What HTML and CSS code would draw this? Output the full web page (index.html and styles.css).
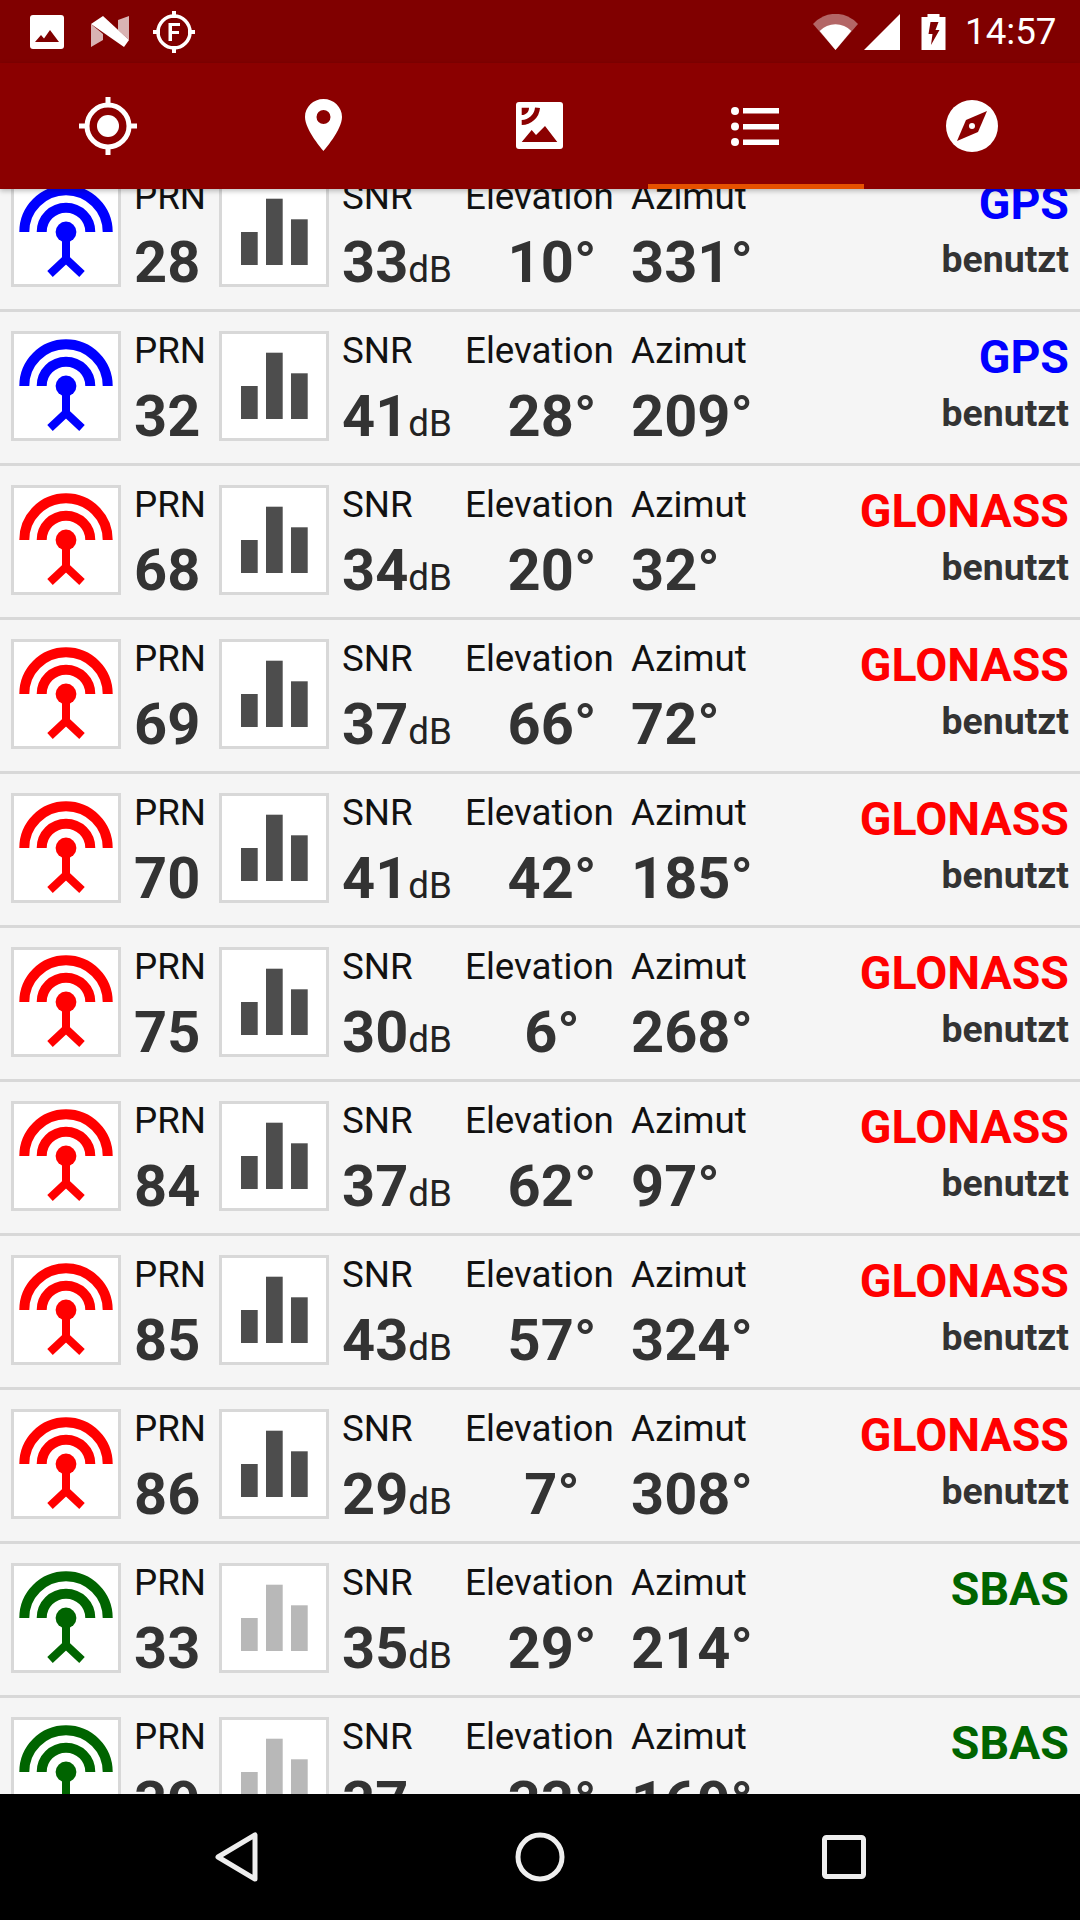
FILE: index.html
```html
<!DOCTYPE html>
<html lang="de">
<head>
<meta charset="utf-8">
<title>Satelliten</title>
<link rel="stylesheet" href="styles.css">
</head>
<body>
<svg class="defs" width="0" height="0" aria-hidden="true">
  <defs>
    <symbol id="ant" viewBox="0 0 104 104">
      <g fill="none" stroke="currentColor" stroke-width="10">
        <path d="M10.3 52A41.7 41.7 0 0 1 93.7 52"/>
        <path d="M27.7 52A24.3 24.3 0 0 1 76.3 52"/>
      </g>
      <circle cx="52" cy="52" r="10.4" fill="currentColor"/>
      <path d="M52 56V80M52 79L36 94M52 79L68 94" fill="none" stroke="currentColor" stroke-width="8"/>
    </symbol>
    <symbol id="bars" viewBox="0 0 104 104">
      <rect x="19" y="52" width="16.7" height="33" fill="currentColor"/>
      <rect x="44" y="18.7" width="16.7" height="66.3" fill="currentColor"/>
      <rect x="69" y="39.3" width="16.7" height="45.7" fill="currentColor"/>
    </symbol>
  </defs>
</svg>
<div class="app">
  <header class="status">
    <svg class="st-img" viewBox="0 0 34 34"><rect width="34" height="34" rx="3" fill="#fff"/><path d="M5 27L11 20L14 23.500L20 15L29 27Z" fill="#800000"/></svg>
    <svg class="st-n" viewBox="0 0 38 31"><path d="M0 8L12 18V24L0 31ZM27 4L38 0V24L27 14Z" fill="#fff" fill-opacity=".7"/><path d="M0 8L12 0L38 24L33 31Z" fill="#fff"/></svg>
    <svg class="st-f" viewBox="0 0 42 42"><circle cx="21" cy="21" r="16" fill="none" stroke="#fff" stroke-width="3.500"/><path d="M21 0V7M21 35V42M0 21H7M35 21H42" stroke="#fff" stroke-width="4"/><path d="M15.500 30V12H27V15H19V20H26V23H19V30Z" fill="#fff"/></svg>
    <div class="spacer"></div>
    <svg class="st-wifi" viewBox="0 0 45 36"><path d="M0 10A30 30 0 0 1 45 10L22.500 36Z" fill="#fff" fill-opacity=".4"/><path d="M6.700 17A22 22 0 0 1 38.300 17L22.500 36Z" fill="#fff"/></svg>
    <svg class="st-sig" viewBox="0 0 36 36"><path d="M0 36L36 0V36Z" fill="#fff"/></svg>
    <svg class="st-bat" viewBox="0 0 24 36"><path d="M6 0H18V3H24V36H0V3H6Z" fill="#fff"/><path d="M9 8H17L14 16H18L9.500 31L11 20H7Z" fill="#800000"/></svg>
    <span class="time">14:57</span>
  </header>
  <nav class="tabs">
    <div class="tab">
      <svg class="ic-target" viewBox="0 0 58 58"><circle cx="29" cy="29" r="21" fill="none" stroke="#fff" stroke-width="5"/><circle cx="29" cy="29" r="11" fill="#fff"/><path d="M29 0V10M29 48V58M0 29H10M48 29H58" stroke="#fff" stroke-width="5"/></svg>
    </div>
    <div class="tab">
      <svg class="ic-pin" viewBox="0 0 37 52"><path fill-rule="evenodd" d="M18.500 0C8.300 0 0 8 0 18C0 31 18.500 52 18.500 52C18.500 52 37 31 37 18C37 8 28.700 0 18.500 0ZM18.500 11A7 7 0 1 1 18.500 25A7 7 0 1 1 18.500 11Z" fill="#fff"/></svg>
    </div>
    <div class="tab">
      <svg class="ic-pic" viewBox="0 0 47 47"><rect width="47" height="47" rx="3" fill="#fff"/><path d="M5.700 40L15.700 28L20 33L29 24L41.300 40Z" fill="#8b0000"/><path d="M5.700 5.700H13C13 10 10 13 5.700 13Z" fill="#8b0000"/><path d="M21.500 5.700A16 16 0 0 1 5.700 20.500" fill="none" stroke="#8b0000" stroke-width="5"/></svg>
    </div>
    <div class="tab tab-on">
      <svg class="ic-list" viewBox="0 0 48 39"><circle cx="4" cy="4" r="4" fill="#fff"/><circle cx="4" cy="19.500" r="4" fill="#fff"/><circle cx="4" cy="35" r="4" fill="#fff"/><path d="M12 1H48V6.500H12ZM12 17H48V22.500H12ZM12 32.500H48V38H12Z" fill="#fff"/></svg>
    </div>
    <div class="tab">
      <svg class="ic-comp" viewBox="0 0 52 52"><circle cx="26" cy="26" r="26" fill="#fff"/><path d="M41 11L32 32L11 41L20 20Z" fill="#8b0000"/><circle cx="26" cy="26" r="3" fill="#fff"/></svg>
    </div>
  </nav>
  <main class="list">
    <div class="rows">

      <article class="row">
        <div class="box c-gps"><svg class="glyph"><use href="#ant"/></svg></div>
        <div class="col col-prn"><span class="lbl">PRN</span><span class="val">28</span></div>
        <div class="box bars"><svg class="glyph"><use href="#bars"/></svg></div>
        <div class="col col-snr"><span class="lbl">SNR</span><span class="val">33<small>dB</small></span></div>
        <div class="col col-ele"><span class="lbl">Elevation</span><span class="val">10°</span></div>
        <div class="col col-azi"><span class="lbl">Azimut</span><span class="val">331°</span></div>
        <div class="side"><span class="sys c-gps">GPS</span><span class="used">benutzt</span></div>
      </article>

      <article class="row">
        <div class="box c-gps"><svg class="glyph"><use href="#ant"/></svg></div>
        <div class="col col-prn"><span class="lbl">PRN</span><span class="val">32</span></div>
        <div class="box bars"><svg class="glyph"><use href="#bars"/></svg></div>
        <div class="col col-snr"><span class="lbl">SNR</span><span class="val">41<small>dB</small></span></div>
        <div class="col col-ele"><span class="lbl">Elevation</span><span class="val">28°</span></div>
        <div class="col col-azi"><span class="lbl">Azimut</span><span class="val">209°</span></div>
        <div class="side"><span class="sys c-gps">GPS</span><span class="used">benutzt</span></div>
      </article>

      <article class="row">
        <div class="box c-glo"><svg class="glyph"><use href="#ant"/></svg></div>
        <div class="col col-prn"><span class="lbl">PRN</span><span class="val">68</span></div>
        <div class="box bars"><svg class="glyph"><use href="#bars"/></svg></div>
        <div class="col col-snr"><span class="lbl">SNR</span><span class="val">34<small>dB</small></span></div>
        <div class="col col-ele"><span class="lbl">Elevation</span><span class="val">20°</span></div>
        <div class="col col-azi"><span class="lbl">Azimut</span><span class="val">32°</span></div>
        <div class="side"><span class="sys c-glo">GLONASS</span><span class="used">benutzt</span></div>
      </article>

      <article class="row">
        <div class="box c-glo"><svg class="glyph"><use href="#ant"/></svg></div>
        <div class="col col-prn"><span class="lbl">PRN</span><span class="val">69</span></div>
        <div class="box bars"><svg class="glyph"><use href="#bars"/></svg></div>
        <div class="col col-snr"><span class="lbl">SNR</span><span class="val">37<small>dB</small></span></div>
        <div class="col col-ele"><span class="lbl">Elevation</span><span class="val">66°</span></div>
        <div class="col col-azi"><span class="lbl">Azimut</span><span class="val">72°</span></div>
        <div class="side"><span class="sys c-glo">GLONASS</span><span class="used">benutzt</span></div>
      </article>

      <article class="row">
        <div class="box c-glo"><svg class="glyph"><use href="#ant"/></svg></div>
        <div class="col col-prn"><span class="lbl">PRN</span><span class="val">70</span></div>
        <div class="box bars"><svg class="glyph"><use href="#bars"/></svg></div>
        <div class="col col-snr"><span class="lbl">SNR</span><span class="val">41<small>dB</small></span></div>
        <div class="col col-ele"><span class="lbl">Elevation</span><span class="val">42°</span></div>
        <div class="col col-azi"><span class="lbl">Azimut</span><span class="val">185°</span></div>
        <div class="side"><span class="sys c-glo">GLONASS</span><span class="used">benutzt</span></div>
      </article>

      <article class="row">
        <div class="box c-glo"><svg class="glyph"><use href="#ant"/></svg></div>
        <div class="col col-prn"><span class="lbl">PRN</span><span class="val">75</span></div>
        <div class="box bars"><svg class="glyph"><use href="#bars"/></svg></div>
        <div class="col col-snr"><span class="lbl">SNR</span><span class="val">30<small>dB</small></span></div>
        <div class="col col-ele"><span class="lbl">Elevation</span><span class="val">6°</span></div>
        <div class="col col-azi"><span class="lbl">Azimut</span><span class="val">268°</span></div>
        <div class="side"><span class="sys c-glo">GLONASS</span><span class="used">benutzt</span></div>
      </article>

      <article class="row">
        <div class="box c-glo"><svg class="glyph"><use href="#ant"/></svg></div>
        <div class="col col-prn"><span class="lbl">PRN</span><span class="val">84</span></div>
        <div class="box bars"><svg class="glyph"><use href="#bars"/></svg></div>
        <div class="col col-snr"><span class="lbl">SNR</span><span class="val">37<small>dB</small></span></div>
        <div class="col col-ele"><span class="lbl">Elevation</span><span class="val">62°</span></div>
        <div class="col col-azi"><span class="lbl">Azimut</span><span class="val">97°</span></div>
        <div class="side"><span class="sys c-glo">GLONASS</span><span class="used">benutzt</span></div>
      </article>

      <article class="row">
        <div class="box c-glo"><svg class="glyph"><use href="#ant"/></svg></div>
        <div class="col col-prn"><span class="lbl">PRN</span><span class="val">85</span></div>
        <div class="box bars"><svg class="glyph"><use href="#bars"/></svg></div>
        <div class="col col-snr"><span class="lbl">SNR</span><span class="val">43<small>dB</small></span></div>
        <div class="col col-ele"><span class="lbl">Elevation</span><span class="val">57°</span></div>
        <div class="col col-azi"><span class="lbl">Azimut</span><span class="val">324°</span></div>
        <div class="side"><span class="sys c-glo">GLONASS</span><span class="used">benutzt</span></div>
      </article>

      <article class="row">
        <div class="box c-glo"><svg class="glyph"><use href="#ant"/></svg></div>
        <div class="col col-prn"><span class="lbl">PRN</span><span class="val">86</span></div>
        <div class="box bars"><svg class="glyph"><use href="#bars"/></svg></div>
        <div class="col col-snr"><span class="lbl">SNR</span><span class="val">29<small>dB</small></span></div>
        <div class="col col-ele"><span class="lbl">Elevation</span><span class="val">7°</span></div>
        <div class="col col-azi"><span class="lbl">Azimut</span><span class="val">308°</span></div>
        <div class="side"><span class="sys c-glo">GLONASS</span><span class="used">benutzt</span></div>
      </article>

      <article class="row">
        <div class="box c-sbas"><svg class="glyph"><use href="#ant"/></svg></div>
        <div class="col col-prn"><span class="lbl">PRN</span><span class="val">33</span></div>
        <div class="box bars off"><svg class="glyph"><use href="#bars"/></svg></div>
        <div class="col col-snr"><span class="lbl">SNR</span><span class="val">35<small>dB</small></span></div>
        <div class="col col-ele"><span class="lbl">Elevation</span><span class="val">29°</span></div>
        <div class="col col-azi"><span class="lbl">Azimut</span><span class="val">214°</span></div>
        <div class="side"><span class="sys c-sbas">SBAS</span></div>
      </article>

      <article class="row">
        <div class="box c-sbas"><svg class="glyph"><use href="#ant"/></svg></div>
        <div class="col col-prn"><span class="lbl">PRN</span><span class="val">39</span></div>
        <div class="box bars off"><svg class="glyph"><use href="#bars"/></svg></div>
        <div class="col col-snr"><span class="lbl">SNR</span><span class="val">37<small>dB</small></span></div>
        <div class="col col-ele"><span class="lbl">Elevation</span><span class="val">33°</span></div>
        <div class="col col-azi"><span class="lbl">Azimut</span><span class="val">169°</span></div>
        <div class="side"><span class="sys c-sbas">SBAS</span></div>
      </article>

    </div>
  </main>
  <footer class="nav">
    <svg class="nav-back" viewBox="0 0 44 50"><path d="M41 3V47L4 25Z" fill="none" stroke="#eee" stroke-width="5" stroke-linejoin="round"/></svg>
    <svg class="nav-home" viewBox="0 0 50 50"><circle cx="25" cy="25" r="22" fill="none" stroke="#eee" stroke-width="5"/></svg>
    <svg class="nav-recent" viewBox="0 0 44 44"><rect x="2.500" y="2.500" width="39" height="39" rx="2" fill="none" stroke="#eee" stroke-width="5"/></svg>
  </footer>
</div>
</body>
</html>
```

FILE: styles.css
```css
* { box-sizing: border-box; }
html, body { margin: 0; padding: 0; }
body { font-family: Roboto, "Liberation Sans", sans-serif; background: #f5f5f5; }
.defs { display: block; height: 0; }
.app { width: 1080px; height: 1920px; display: flex; flex-direction: column; overflow: hidden; }

.status { height: 63px; flex: none; background: #800000; display: flex; align-items: center; padding: 0 24px 0 30px; color: #fff; }
.status svg { flex: none; display: block; }
.st-img { width: 34px; height: 34px; margin-right: 27px; }
.st-n { width: 38px; height: 31px; margin-right: 24px; }
.st-f { width: 42px; height: 42px; }
.spacer { flex: 1; }
.st-wifi { width: 45px; height: 36px; margin-right: 6px; }
.st-sig { width: 36px; height: 36px; margin-right: 21px; }
.st-bat { width: 25px; height: 36px; margin-right: 19px; }
.time { font-size: 36.75px; line-height: 40px; width: 91px; white-space: nowrap; }

.tabs { height: 126px; flex: none; background: #8b0000; display: grid; grid-template-columns: repeat(5, 1fr); position: relative; z-index: 2; box-shadow: 0 2px 5px rgba(0,0,0,.25); }
.tab { display: flex; align-items: center; justify-content: center; border-bottom: 5px solid transparent; border-top: 5px solid transparent; }
.tab-on { border-bottom-color: #e65100; }
.ic-target { width: 58px; height: 58px; }
.ic-pin { width: 37px; height: 52px; margin: 0 2px 2px 0; }
.ic-pic { width: 47px; height: 47px; margin: 0 2px 2px 0; }
.ic-list { width: 48px; height: 39px; margin-right: 2px; }
.ic-comp { width: 52px; height: 52px; }

.list { flex: 1; min-height: 0; overflow: hidden; background: #f5f5f5; }
.rows { margin-top: -31px; }
.row { height: 154px; border-bottom: 3px solid #d8d8d8; display: flex; align-items: flex-start; padding: 19px 11px 0 11px; }
.box { width: 110px; height: 110px; flex: none; background: #fff; border: 3px solid #d8d8d8; }
.glyph { width: 104px; height: 104px; display: block; }
.bars { color: #4d4d4d; }
.bars.off { color: #b8b8b8; }

.col { display: flex; flex-direction: column; flex: none; margin-top: -2px; }
.col-prn { width: 85px; margin-left: 13px; }
.col-snr { width: 123px; margin-left: 13px; }
.col-ele { width: 166px; }
.col-azi { width: 200px; }
.lbl { font-size: 36.75px; line-height: 44px; color: #111; white-space: nowrap; }
.val { font-size: 57.75px; line-height: 60px; font-weight: 700; color: #333; margin-top: 13px; white-space: nowrap; }
.val small { font-size: 36.75px; font-weight: 400; color: #222; }
.col-ele .val { text-align: center; width: 174px; }

.side { flex: 1; display: flex; flex-direction: column; align-items: flex-end; margin-top: 1px; }
.sys { font-size: 46.5px; line-height: 50px; font-weight: 700; }
.used { font-size: 37.4px; line-height: 40px; font-weight: 700; color: #333; margin-top: 11px; }
.c-gps { color: #0000ff; }
.c-glo { color: #ff0000; }
.c-sbas { color: #006400; }

.nav { height: 126px; flex: none; background: #000; display: flex; align-items: center; position: relative; z-index: 2; padding: 0 214px; justify-content: space-between; }
.nav-back { width: 44px; height: 50px; }
.nav-home { width: 50px; height: 50px; }
.nav-recent { width: 44px; height: 44px; }
```
